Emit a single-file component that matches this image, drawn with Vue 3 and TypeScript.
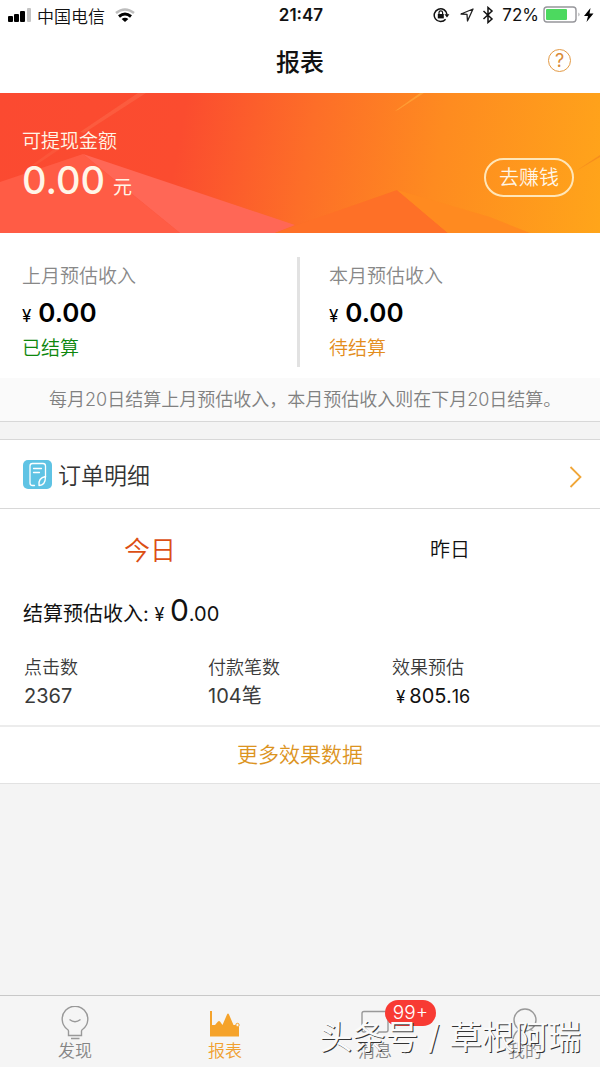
<script setup lang="ts">
import { ref } from 'vue'

interface Income {
  label: string
  amount: string
  status: string
  settled: boolean
}

const incomes: Income[] = [
  { label: '上月预估收入', amount: '0.00', status: '已结算', settled: true },
  { label: '本月预估收入', amount: '0.00', status: '待结算', settled: false },
]

const days = ['今日', '昨日']
const activeDay = ref(0)
</script>

<template>
  <div class="page">
    <div class="status">
      <div class="status-side">
        <svg class="signal" width="24" height="14" viewBox="0 0 24 14" aria-hidden="true">
          <rect x="0" y="8" width="5" height="6" rx="1" />
          <rect x="6" y="6" width="5" height="8" rx="1" />
          <rect x="12" y="3" width="5" height="11" rx="1" />
          <rect x="19" y="0" width="4" height="14" rx="1" fill="#c4c4c4" />
        </svg>
        <span>中国电信</span>
        <svg class="wifi" width="20" height="14" viewBox="0 0 20 14" fill="none" aria-hidden="true">
          <path d="M1 5Q10-2 19 5" stroke="#bdbdbd" stroke-width="2.6" />
          <path d="M4 8.5Q10 3.5 16 8.5" stroke="#000" stroke-width="3" />
          <path d="M6.6 11Q10 8.5 13.4 11L10 14z" fill="#000" />
        </svg>
      </div>
      <time class="clock">21:47</time>
      <div class="status-side right">
        <svg width="17" height="16" viewBox="0 0 17 16" fill="none" stroke="#111" stroke-width="1.5" aria-hidden="true">
          <path d="M12.6 12.2A6.4 6.4 0 1 1 14 7.6" />
          <path d="M11.4 7.2h5L14 10.4z" fill="#111" stroke="none" />
          <rect x="4.8" y="7" width="6" height="4.4" fill="#111" stroke="none" />
          <path d="M6 7.2V5.6a1.8 1.8 0 0 1 3.6 0v1.6" stroke-width="1.2" />
        </svg>
        <svg class="locate" width="14" height="14" viewBox="0 0 14 14" fill="none" stroke="#222" stroke-width="1.3" stroke-linejoin="round" aria-hidden="true">
          <path d="M1 6L13 1 7.5 13 7 6.4z" />
        </svg>
        <svg class="bluetooth" width="12" height="18" viewBox="0 0 12 18" fill="none" stroke="#111" stroke-width="1.5" aria-hidden="true">
          <path d="M1.5 5L10 13 6 16.5V1.5L10 5 1.5 13" />
        </svg>
        <span>72%</span>
        <svg class="battery" width="38" height="18" viewBox="0 0 38 18" fill="none" aria-hidden="true">
          <rect x="1" y="1" width="32" height="15" rx="3" stroke="#96969b" stroke-width="1.4" />
          <rect x="3" y="3" width="21" height="11" rx="1" fill="#4cd95f" />
          <path d="M35.5 6.5q2 2 0 4z" fill="#96969b" />
        </svg>
        <svg width="10" height="14" viewBox="0 0 10 14" aria-hidden="true">
          <path d="M6.5 0L0 8h4L2.5 14 9.5 5.6h-4z" />
        </svg>
      </div>
    </div>

    <header class="navbar">
      <h1>报表</h1>
      <button class="help" type="button" aria-label="帮助">?</button>
    </header>

    <section class="hero">
      <svg class="hero-art" viewBox="0 0 600 140" preserveAspectRatio="none" aria-hidden="true">
        <path d="M138 0L80 39 84 40 146 0z" fill="#ff8060" opacity=".3" />
        <path d="M60 52L32 72 36 72 66 52z" fill="#ff8060" opacity=".2" />
        <path d="M0 89L83 61 180 140H0z" fill="#ff5c45" />
        <path d="M83 61L295 132 275 140H180z" fill="#ff6756" />
        <path d="M275 140L300 131 397 97 448 140z" fill="#fe7027" />
        <path d="M397 97L490 124 530 140H448z" fill="#ff8a20" />
        <path d="M395 18L420 0h4L398 17z" fill="#ffa83a" opacity=".7" />
        <path d="M576 78L600 62V64z" fill="#ef8020" opacity=".6" />
      </svg>
      <div class="balance">
        <span class="balance-label">可提现金额</span>
        <p class="balance-value">0.00<small>元</small></p>
      </div>
      <button class="earn" type="button">去赚钱</button>
    </section>

    <section class="income">
      <div v-for="item in incomes" :key="item.label" class="income-item">
        <p class="income-label">{{ item.label }}</p>
        <p class="income-amount"><small>¥</small>{{ item.amount }}</p>
        <p :class="item.settled ? 'done' : 'pending'">{{ item.status }}</p>
      </div>
    </section>
    <p class="notice">每月20日结算上月预估收入，本月预估收入则在下月20日结算。</p>

    <section class="orders">
      <a class="orders-head" href="#orders">
        <svg width="29" height="29" viewBox="0 0 29 29" fill="none" stroke="#fff" stroke-width="1.3" stroke-linecap="round" stroke-linejoin="round" aria-hidden="true">
          <rect width="29" height="29" rx="5" fill="#5fc3e4" stroke="none" />
          <path d="M11.5 25.5H9.5Q7 25.5 7 23V6Q7 3.5 9.5 3.5H20Q22.5 3.5 22.5 6V17" />
          <path d="M10.5 8.5h8M10.5 12.5h6" />
          <path d="M22.5 16.5Q22.5 25.5 16 25.5 15 18 22.5 16.5z" />
        </svg>
        <span class="orders-title">订单明细</span>
        <svg class="chevron" width="13" height="22" viewBox="0 0 13 22" fill="none" stroke="#f0a638" stroke-width="1.8" aria-hidden="true">
          <path d="M1.5 1L11.5 11 1.5 21" />
        </svg>
      </a>
      <div class="days">
        <button
          v-for="(day, i) in days"
          :key="day"
          type="button"
          :class="{ active: activeDay === i }"
          :aria-pressed="activeDay === i"
          @click="activeDay = i"
        >{{ day }}</button>
      </div>
      <p class="settle">结算预估收入: <span class="yen">¥</span> <b>0</b>.00</p>
      <dl class="stats">
        <div>
          <dt>点击数</dt>
          <dd>2367</dd>
        </div>
        <div>
          <dt>付款笔数</dt>
          <dd>104笔</dd>
        </div>
        <div>
          <dt>效果预估</dt>
          <dd class="money"><span class="sign">¥</span>805.<small>16</small></dd>
        </div>
      </dl>
      <a class="more" href="#more">更多效果数据</a>
    </section>

    <nav class="tabbar">
      <a class="tab" href="#discover">
        <svg width="28" height="34" viewBox="0 0 28 34" fill="none" stroke="#999" stroke-width="1.4" aria-hidden="true">
          <path d="M7.5 29.5V25Q7.5 24 6 23A12.8 12.8 0 1 1 22 23Q20.5 24 20.5 25V29.5z" />
          <path d="M8.5 13.5Q14 18 19.5 13.5M10 32.5h8.5" />
        </svg>
        <span>发现</span>
      </a>
      <a class="tab current" href="#report" aria-current="page">
        <svg width="30" height="34" viewBox="0 0 30 34" fill="#f5a32b" aria-hidden="true">
          <path d="M0 5h2V19H5L8 15.5Q9 14.5 10 15.5L12.5 19 17 8.5Q18 6.5 19 8.5L23.5 19H27L29 21V30.5H0z" />
          <circle cx="27.5" cy="19" r="1.7" fill="#f5f5f5" stroke="#f5a32b" />
        </svg>
        <span>报表</span>
      </a>
      <a class="tab" href="#message">
        <span class="tab-icon">
          <svg width="28" height="34" viewBox="0 0 28 34" fill="none" stroke="#999" stroke-width="1.4" aria-hidden="true">
            <path d="M3 5.5H25Q27 5.5 27 7.5V24Q27 26 25 26H18L14 30 10 26H3Q1 26 1 24V7.5Q1 5.5 3 5.5z" />
          </svg>
          <em class="badge">99+</em>
        </span>
        <span>消息</span>
      </a>
      <a class="tab" href="#mine">
        <svg width="28" height="34" viewBox="0 0 28 34" fill="none" stroke="#999" stroke-width="1.4" aria-hidden="true">
          <circle cx="14" cy="14" r="11" />
          <path d="M2 33Q4 25 9 23.5M26 33Q24 25 19 23.5" />
        </svg>
        <span>我的</span>
      </a>
    </nav>
    <div class="watermark">头条号 / 草根阿瑞</div>
  </div>
</template>

<style>
body {
  margin: 0;
}
</style>

<style scoped>
.page {
  position: relative;
  display: flex;
  flex-direction: column;
  min-height: 100vh;
  background: #f4f4f4;
  color: #111;
  font-family: Inter, "Noto Sans CJK SC", sans-serif;
  font-weight: 350;
}

p, h1, dl, dd {
  margin: 0;
}

a {
  color: inherit;
  text-decoration: none;
}

button {
  padding: 0;
  border: 0;
  background: none;
  color: inherit;
  font: inherit;
}

small, b, .yen, .sign {
  line-height: 1;
}

svg {
  display: block;
  flex: none;
}

.status {
  display: grid;
  grid-template-columns: 1fr auto 1fr;
  align-items: center;
  height: 30px;
  padding: 0 6px 0 8px;
  background: #fff;
  font-size: 17px;
}

.status-side {
  display: flex;
  align-items: center;
}

.signal {
  margin-right: 5px;
}

.wifi {
  margin-left: 10px;
}

.clock {
  font-weight: 600;
}

.right {
  justify-content: flex-end;
  font-weight: 400;
}

.locate {
  margin: 0 8px 0 10px;
}

.bluetooth {
  margin-right: 8px;
}

.battery {
  margin: 0 3px 0 4px;
}

.navbar {
  display: grid;
  grid-template-columns: 1fr auto 1fr;
  align-items: center;
  height: 61px;
  padding: 0 29px 2px;
  background: #fff;
}

h1 {
  grid-column: 2;
  font-size: 24px;
  font-weight: 500;
}

.help {
  justify-self: end;
  width: 23px;
  height: 23px;
  border: 1px solid #e39a45;
  border-radius: 50%;
  color: #d98a35;
  font-size: 18px;
  font-weight: 400;
  line-height: 21px;
}

.hero {
  position: relative;
  display: flex;
  align-items: center;
  justify-content: space-between;
  height: 140px;
  padding: 0 26px 0 22px;
  background: linear-gradient(100deg, #fb4a31 0%, #fb4c2f 30%, #fd6e28 51%, #fe8b20 72%, #ffa51a 100%);
  color: #fff6e8;
}

.hero-art {
  position: absolute;
  inset: 0;
  width: 100%;
  height: 100%;
}

.balance,
.earn {
  position: relative;
}

.balance {
  padding-top: 5px;
}

.balance-label {
  font-size: 19px;
  line-height: 28px;
}

.balance-value {
  font-size: 38px;
  font-weight: 500;
  line-height: 48px;
}

.balance-value small {
  margin-left: 8px;
  font-size: 19px;
  font-weight: 400;
}

.earn {
  width: 90px;
  height: 39px;
  padding-top: 2px;
  margin-top: 29px;
  border: 2px solid #ffe6b8;
  border-radius: 20px;
  font-size: 20px;
  line-height: 33px;
}

.income {
  display: grid;
  grid-template-columns: 1fr 1fr;
  padding: 24px 0 11px;
  background: #fff;
  font-size: 19px;
  line-height: 36px;
}

.income-item {
  padding: 2px 0 0 29px;
}

.income-item:first-child {
  padding-left: 22px;
  border-right: 3px solid #e2e2e2;
}

.income-label {
  color: #888;
}

.income-amount {
  color: #000;
  font-size: 26px;
  font-weight: 600;
}

.income-amount small {
  margin-right: 7px;
  font-size: 17px;
  font-weight: 400;
}

.done {
  color: #0d870d;
}

.pending {
  color: #e38d1c;
}

.notice {
  padding-left: 49px;
  border-bottom: 1px solid #d8d8d8;
  background: #fafafa;
  color: #808080;
  font-size: 18px;
  line-height: 43px;
}

.orders {
  margin-top: 17px;
  border-top: 1px solid #d8d8d8;
  border-bottom: 1px solid #e2e2e2;
  background: #fff;
}

.orders-head {
  display: flex;
  align-items: center;
  height: 68px;
  padding: 0 18px 0 23px;
  border-bottom: 1px solid #d8d8d8;
}

.orders-title {
  margin-left: 6px;
  color: #333;
  font-size: 23px;
}

.chevron {
  margin: 6px 0 0 auto;
}

.days {
  display: grid;
  grid-template-columns: 1fr 1fr;
  height: 78px;
}

.days button {
  color: #111;
  font-size: 20px;
}

.days .active {
  color: #dc4f14;
  font-size: 26px;
}

.settle {
  padding-left: 23px;
  font-size: 20px;
  font-weight: 400;
  line-height: 54px;
}

.yen {
  font-size: 18px;
}

.settle b {
  font-size: 30px;
  font-weight: 400;
}

.stats {
  display: grid;
  grid-template-columns: 184px 184px 1fr;
  padding: 12px 0 14px 24px;
  color: #3a3a3a;
  font-size: 18px;
  line-height: 29px;
}

.stats dd {
  font-size: 20px;
  font-weight: 400;
}

.stats .money {
  color: #111;
}

.money .sign {
  margin: 0 4px;
  font-size: 17px;
}

.money small {
  font-size: 18px;
}

.more {
  display: block;
  border-top: 2px solid #ececec;
  color: #dc941f;
  font-size: 21px;
  line-height: 56px;
  text-align: center;
}

.tabbar {
  display: grid;
  grid-template-columns: repeat(4, 1fr);
  height: 71px;
  margin-top: auto;
  border-top: 1px solid #c8c8c8;
  background: #f5f5f5;
}

.tab {
  display: flex;
  flex-direction: column;
  align-items: center;
  padding-top: 10px;
  color: #858585;
  font-size: 17px;
  line-height: 22px;
}

.current {
  color: #f0a030;
}

.tab-icon {
  position: relative;
}

.badge {
  position: absolute;
  top: -6px;
  left: 24px;
  width: 51px;
  border-radius: 13px;
  background: #f83a33;
  color: #fff;
  font-size: 19px;
  font-style: normal;
  line-height: 26px;
  text-align: center;
}

.watermark {
  position: absolute;
  right: 19px;
  bottom: 8px;
  color: #fafafa;
  font-size: 33px;
  font-weight: 400;
  line-height: 44px;
  text-shadow: 1px 1px 0 #333;
  pointer-events: none;
}
</style>
